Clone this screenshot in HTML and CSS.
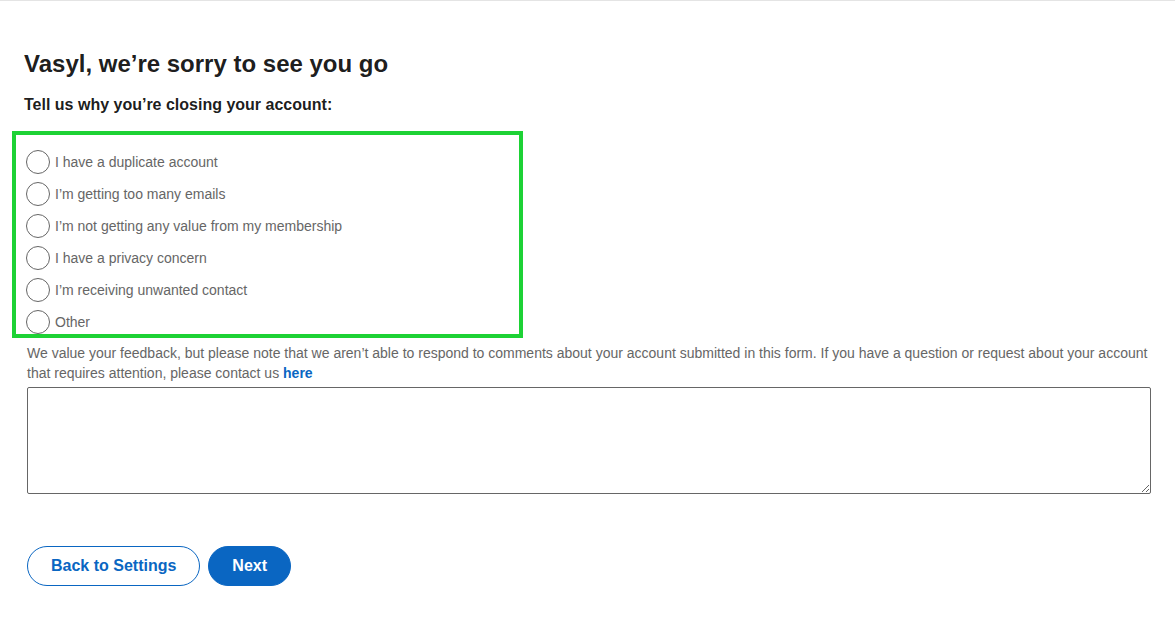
FILE: index.html
```html
<!DOCTYPE html>
<html lang="en">
<head>
    <meta charset="UTF-8">
    <title>Close account</title>
    <link rel="stylesheet" href="styles.css">
</head>
<body>

<div class="page">
    <h1 class="page-title">Vasyl, we’re sorry to see you go</h1>
    <h2 class="page-subtitle">Tell us why you’re closing your account:</h2>

    <div class="reasons">
        <label class="reason"><input type="radio" name="reason"><span>I have a duplicate account</span></label>
        <label class="reason"><input type="radio" name="reason"><span>I’m getting too many emails</span></label>
        <label class="reason"><input type="radio" name="reason"><span>I’m not getting any value from my membership</span></label>
        <label class="reason"><input type="radio" name="reason"><span>I have a privacy concern</span></label>
        <label class="reason"><input type="radio" name="reason"><span>I’m receiving unwanted contact</span></label>
        <label class="reason"><input type="radio" name="reason"><span>Other</span></label>
    </div>

    <p class="note">We value your feedback, but please note that we aren’t able to respond to comments about your account submitted in this form. If you have a question or request about your account that requires attention, please contact us <a href="#">here</a></p>

    <textarea class="feedback"></textarea>

    <div class="actions">
        <button class="btn btn-secondary">Back to Settings</button>
        <button class="btn btn-primary">Next</button>
    </div>
</div>

</body>
</html>
```

FILE: styles.css
```css
body {
    margin: 0;
    font-family: "Liberation Sans", Arial, sans-serif;
    background-color: #fff;
    color: rgba(0, 0, 0, .9);
}
.page {
    border-top: 1px solid #e4e4e4;
    padding: 0 24px 40px 24px;
}
.page-title {
    margin: 48px 0 0 0;
    font-size: 24px;
    line-height: 30px;
    font-weight: bold;
}
.page-subtitle {
    margin: 16px 0 0 0;
    font-size: 16px;
    line-height: 20px;
    font-weight: bold;
}

/* reasons list with green highlight */
.reasons {
    display: flex;
    flex-direction: column;
    gap: 8px;
    width: 493px;
    margin: 16px 0 0 -12px;
    padding: 15px 0 0 10px;
    height: 184px;
    box-sizing: content-box;
    border: 4px solid #1dd235;
    overflow: hidden;
}
.reason {
    display: flex;
    align-items: center;
    height: 24px;
    font-size: 14px;
    color: #666;
    cursor: pointer;
}
.reason input {
    appearance: none;
    -webkit-appearance: none;
    margin: 0 5px 0 0;
    width: 24px;
    height: 24px;
    border: 1.5px solid #666;
    border-radius: 50%;
    box-sizing: border-box;
}

.note {
    margin: 5px 0 0 3px;
    font-size: 14px;
    line-height: 20px;
    color: #666;
}
.note a {
    color: #0a66c2;
    font-weight: bold;
    text-decoration: none;
}
.feedback {
    display: block;
    margin: 4px 0 0 3px;
    width: calc(100% - 3px);
    height: 107px;
    box-sizing: border-box;
    border: 1px solid #666;
    border-radius: 2px;
    font-family: inherit;
}

.actions {
    display: flex;
    gap: 8px;
    margin: 52px 0 0 3px;
}
.btn {
    height: 40px;
    padding: 0 23px;
    border-radius: 20px;
    font-family: inherit;
    font-size: 16px;
    font-weight: bold;
    cursor: pointer;
}
.btn-secondary {
    background: #fff;
    color: #0a66c2;
    border: 1px solid #0a66c2;
}
.btn-primary {
    background: #0a66c2;
    color: #fff;
    border: 1px solid #0a66c2;
}
```
